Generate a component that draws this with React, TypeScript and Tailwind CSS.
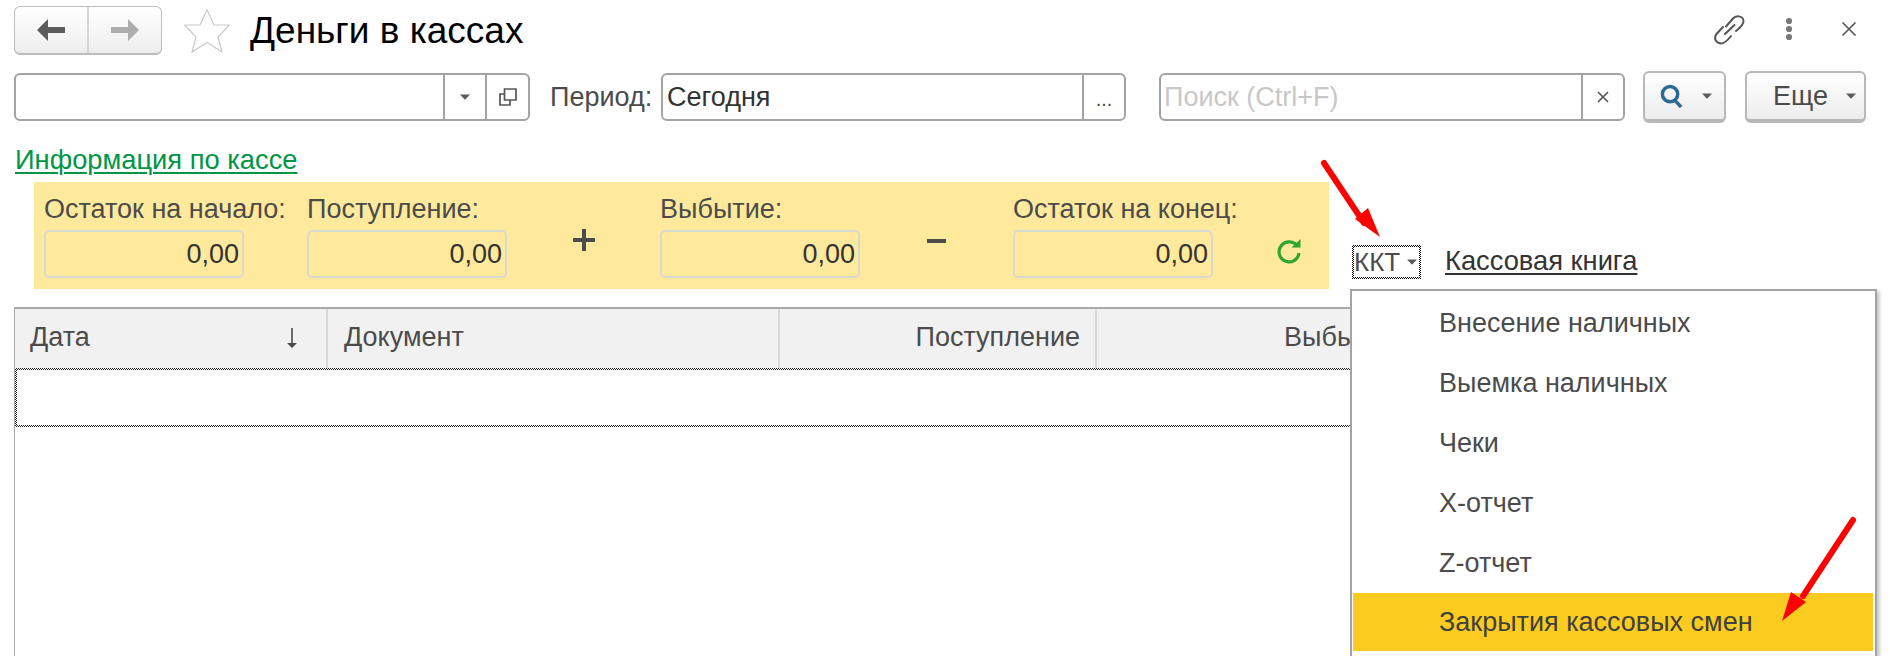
import React from "react";

const Caret = ({ className = "" }: { className?: string }) => (
  <svg width="10" height="6" viewBox="0 0 10 6" className={className}>
    <path d="M0 0.5 H10 L5 5.8 Z" fill="#5a5a5a" />
  </svg>
);

const Cell = ({ className = "", children }: { className?: string; children?: React.ReactNode }) => (
  <div className={`flex items-center ${className}`}>{children}</div>
);

const Amount = ({ label, w }: { label: string; w: string }) => (
  <div className={`flex flex-col ${w}`}>
    <div className="h-[36px] leading-[42px] whitespace-nowrap text-[#4b4b4b]">{label}</div>
    <div className="mt-[6px] w-[200px] h-[48px] rounded-[5px] border-2 border-[#d9d9d4] flex items-center justify-end pr-[3px] text-[#333]">
      0,00
    </div>
  </div>
);

const items = ["Внесение наличных", "Выемка наличных", "Чеки", "X-отчет", "Z-отчет"];

export default function App() {
  return (
    <div className="relative w-[1890px] h-[656px] overflow-hidden bg-white text-[27px] text-[#4b4b4b] font-['Liberation_Sans',Arial,sans-serif]">
      {/* title row */}
      <div className="flex items-center pl-[14px] pr-[33px] pt-[6px] h-[55px]">
        <div className="flex w-[148px] h-[49px] rounded-[6px] border border-[#bdbdbd] border-b-2 bg-gradient-to-b from-white to-[#eeeeee]">
          <div className="w-[74px] flex items-center justify-center border-r-2 border-[#d4d4d4]">
            <svg width="28" height="22" viewBox="0 0 28 22"><path d="M0 11 L11 0 V8 H28 V14 H11 V22 Z" fill="#5c5c5c" /></svg>
          </div>
          <div className="flex-1 flex items-center justify-center">
            <svg width="28" height="22" viewBox="0 0 28 22"><path d="M28 11 L17 0 V8 H0 V14 H17 V22 Z" fill="#adadad" /></svg>
          </div>
        </div>
        <svg className="ml-[22px]" width="46" height="44" viewBox="0 0 46 44">
          <path d="M23 .8 L30 16 H45.5 L34 28 L38 43 L23 33.5 L8 43 L12 28 L.5 16 H16 Z" fill="none" stroke="#c6c9cd" strokeWidth="1.2" />
        </svg>
        <div className="ml-[20px] text-[37px] leading-[44px] text-black whitespace-nowrap">Деньги в кассах</div>
        <div className="ml-auto flex items-center mb-[4px]">
          <svg width="32" height="32" viewBox="-1 -1 32 32" fill="none" stroke="#555" strokeWidth="2" strokeLinecap="round">
            <path d="M12 12.5 L19 4.5 C22 1 29 1.5 29.5 7 C29.7 10 27 13 22 17" />
            <path d="M9 13 L2.5 20 C-0.5 24 1.5 29 7 29.5 C10 29.5 13 27 17 22" />
            <path d="M11 20 L20.5 11" />
          </svg>
          <svg className="ml-[40px]" width="8" height="24" viewBox="0 0 8 24" fill="#777">
            <circle cx="4" cy="4" r="3.1" /><circle cx="4" cy="12" r="3.1" /><circle cx="4" cy="20" r="3.1" />
          </svg>
          <svg className="ml-[48px]" width="16" height="16" viewBox="0 0 16 16" stroke="#555" strokeWidth="1.6">
            <path d="M1.5 1.5 L14.5 14.5 M14.5 1.5 L1.5 14.5" />
          </svg>
        </div>
      </div>

      {/* filter row */}
      <div className="flex items-center pl-[14px] mt-[16px] h-[52px]">
        <div className="flex w-[516px] h-[48px] rounded-[6px] border-2 border-[#a3a3a3]">
          <div className="flex-1 border-r-2 border-[#a3a3a3]" />
          <Cell className="w-[42px] justify-center border-r-2 border-[#a3a3a3]"><Caret /></Cell>
          <Cell className="flex-1 max-w-[41px] justify-center">
            <svg width="18" height="18" viewBox="0 0 18 18" fill="none" stroke="#555" strokeWidth="1.7">
              <path d="M5.5 1 H17 V12 H5.5 Z" /><path d="M5.5 6 H1 V17 H11 V12" />
            </svg>
          </Cell>
        </div>
        <div className="ml-[20px] w-[111px] whitespace-nowrap text-[#4b4b4b]">Период:</div>
        <div className="flex w-[465px] h-[48px] rounded-[6px] border-2 border-[#a3a3a3]">
          <div className="flex-1 border-r-2 border-[#a3a3a3] pl-[4px] flex items-center text-[#333]">Сегодня</div>
          <Cell className="w-[40px] justify-center text-[20px] pt-[4px]">...</Cell>
        </div>
        <div className="ml-[33px] flex w-[466px] h-[48px] rounded-[6px] border-2 border-[#a3a3a3]">
          <div className="flex-1 border-r-2 border-[#a3a3a3] pl-[3px] flex items-center text-[#c8c8c8]">Поиск (Ctrl+F)</div>
          <Cell className="w-[40px] justify-center">
            <svg width="12" height="12" viewBox="0 0 12 12" stroke="#555" strokeWidth="1.6"><path d="M1 1 L11 11 M11 1 L1 11" /></svg>
          </Cell>
        </div>
        <div className="ml-[18px] w-[83px] h-[52px] rounded-[6px] border-2 border-[#b8b8b8] border-b-[4px] bg-gradient-to-b from-white to-[#ededed] flex items-center pl-[15px]">
          <svg width="23" height="24" viewBox="0 0 24 25" fill="none" stroke="#2a6a94" strokeWidth="3.6">
            <circle cx="10.5" cy="10.5" r="8" /><path d="M15.5 17 L22 24" />
          </svg>
          <Caret className="ml-[19px]" />
        </div>
        <div className="ml-[19px] w-[121px] h-[52px] rounded-[6px] border-2 border-[#b8b8b8] border-b-[4px] bg-gradient-to-b from-white to-[#ededed] flex items-center pl-[26px] text-[#4b4b4b]">
          Еще
          <Caret className="ml-[18px]" />
        </div>
      </div>

      {/* link */}
      <div className="pl-[15px] mt-[22px] h-[36px] text-[27.3px] leading-[30px] text-[#009646] underline decoration-2 underline-offset-[3px] whitespace-nowrap">
        Информация по кассе
      </div>

      {/* totals row */}
      <div className="flex items-end mt-[1px] pl-[34px]">
        <div className="flex w-[1295px] h-[107px] bg-[#ffe99c] pl-[10px] pt-[6px]">
          <Amount label="Остаток на начало:" w="w-[263px]" />
          <Amount label="Поступление:" w="w-[200px]" />
          <div className="w-[153px] flex justify-center pt-[41px]">
            <svg width="22" height="22" viewBox="0 0 22 22" fill="#4b4b4b"><path d="M9 0 H13 V9 H22 V13 H13 V22 H9 V13 H0 V9 H9 Z" /></svg>
          </div>
          <Amount label="Выбытие:" w="w-[199px]" />
          <div className="w-[154px] flex justify-center pt-[51px]">
            <div className="w-[19px] h-[4px] bg-[#4b4b4b]" />
          </div>
          <Amount label="Остаток на конец:" w="w-[263px]" />
          <div className="pt-[50px]">
            <svg width="26" height="26" viewBox="0 0 26 26" fill="none" stroke="#2ea52e" strokeWidth="3.2">
              <path d="M21.5 8.5 A10 10 0 1 0 23 15" />
              <path d="M15.5 9.5 L24.5 9.5 L24.5 1 Z" fill="#2ea52e" stroke="none" />
            </svg>
          </div>
        </div>
        <div className="flex items-center ml-[23px] mb-[7px]">
          <div className="w-[69px] h-[34px] p-[2px] bg-[conic-gradient(#000_25%,#fff_0_50%,#000_0_75%,#fff_0)] bg-[length:2px_2px]">
            <div className="w-full h-full bg-white flex items-center text-[26px] leading-none text-[#4b4b4b]">
              ККТ
              <Caret className="ml-[7px]" />
            </div>
          </div>
          <div className="ml-[24px] text-[27.3px] text-[#333] underline decoration-2 underline-offset-[3px] whitespace-nowrap">Кассовая книга</div>
        </div>
      </div>

      {/* table */}
      <div className="ml-[14px] mr-[24px] mt-[18px] h-[349px] border-t-2 border-l border-[#a8a8a8]">
        <div className="flex h-[59px] bg-[#f1f1f1]">
          <div className="w-[313px] flex items-center justify-between pl-[15px] pr-[29px] pb-[2px] border-r-2 border-[#d8d8d8]">
            Дата
            <svg width="10" height="20" viewBox="0 0 10 20" fill="#4b4b4b"><path d="M4.2 0 H5.8 V15 H10 L5 20 L0 15 H4.2 Z" /></svg>
          </div>
          <div className="w-[452px] flex items-center pl-[16px] pb-[2px] border-r-2 border-[#d8d8d8]">Документ</div>
          <div className="w-[317px] flex items-center justify-end pr-[15px] pb-[2px] border-r-2 border-[#d8d8d8]">Поступление</div>
          <div className="flex-1 flex items-center pl-[187px] pb-[2px]">Выбытие</div>
        </div>
        <div className="h-[59px] p-[2px] bg-[conic-gradient(#222_25%,#fff_0_50%,#222_0_75%,#fff_0)] bg-[length:2px_2px]">
          <div className="w-full h-full bg-white" />
        </div>
      </div>

      {/* dropdown menu */}
      <div className="absolute left-[1350px] top-[289px] w-[527px] h-[380px] bg-white border-2 border-[#a3a3a3] shadow-[3px_2px_3px_rgba(0,0,0,0.2)] pt-[2px] pl-[1px] pr-[2px]">
        {items.map((t) => (
          <div key={t} className="h-[60px] flex items-center pl-[86px] text-[#4b4b4b]">{t}</div>
        ))}
        <div className="h-[58px] bg-[#fbcb20] flex items-center pl-[86px] text-[#404040]">Закрытия кассовых смен</div>
      </div>

      {/* annotation arrows */}
      <svg className="absolute left-0 top-0 pointer-events-none" width="1890" height="656">
        <path d="M1324 163 L1364 223" stroke="#fe0000" strokeWidth="6" strokeLinecap="round" />
        <path d="M1380 237 L1355 219 L1368 208 Z" fill="#fe0000" />
        <path d="M1853 520 L1803 596" stroke="#fe0000" strokeWidth="6" strokeLinecap="round" />
        <path d="M1782 621 L1791 592 L1806 602 Z" fill="#fe0000" />
      </svg>
    </div>
  );
}
